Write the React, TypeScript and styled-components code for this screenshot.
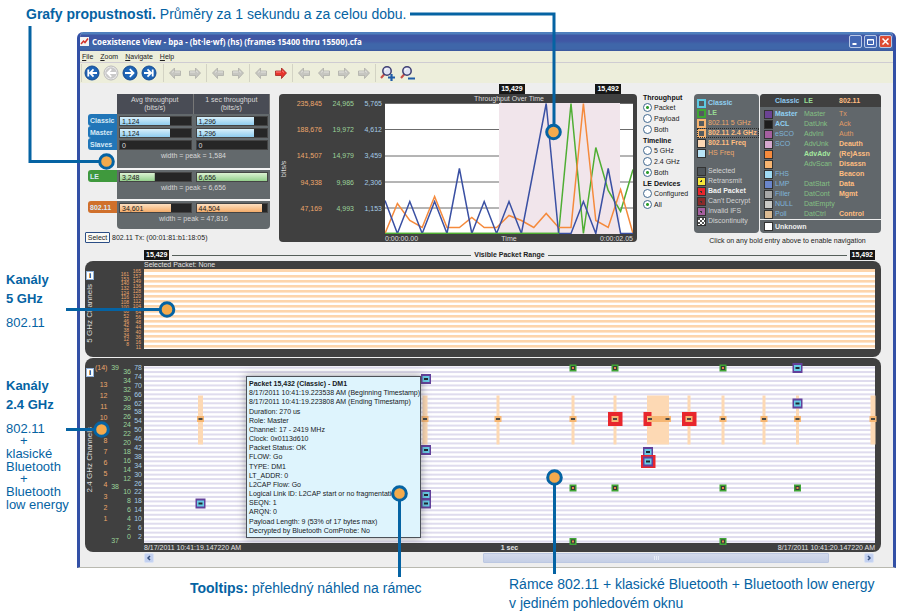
import React from 'react';
import styled, { createGlobalStyle, css } from 'styled-components';

const BLUE = '#0563a3';
const DARK = '#404040';
const ORANGE = '#eda76c';
const GREEN = '#9bd39a';
const SKY = '#a5cbe6';

const Global = createGlobalStyle`
  * { box-sizing: border-box; }
  body { margin: 0; background: #fff; font-family: "Liberation Sans", Arial, sans-serif; }
  button { font: inherit; color: inherit; padding: 0; margin: 0; border: 0; background: none; cursor: pointer; }
`;

const Page = styled.main`
  position: relative;
  display: grid;
  grid-template-columns: 77px minmax(0, 1fr);
  grid-template-rows: 32px auto auto;
  padding-right: 4px;
  color: ${BLUE};
  font-size: 13px;
`;

const TopNote = styled.p`
  grid-column: 1 / -1;
  margin: 0;
  padding: 5px 0 0 26px;
  line-height: 18px;
  font-size: 14px;
`;

const SideNotes = styled.aside`
  padding: 238px 0 0 6px;
  white-space: nowrap;
`;

const SideHeading = styled.h2`
  margin: 0;
  font-size: 13px;
  line-height: 19px;
`;

const SideText = styled.p<{ $last?: boolean }>`
  margin: 8px 0 ${p => (p.$last ? 0 : 47)}px;
  line-height: 13px;
  font-size: 13px;
`;

const Plus = styled.span`
  display: block;
  padding-left: 14px;
  line-height: 12px;
`;

const BottomNotes = styled.footer`
  grid-column: 1 / -1;
  display: grid;
  grid-template-columns: 319px 1fr;
  padding: 7px 0 0 190px;
  font-size: 14px;
  line-height: 19px;
  p { margin: 0; }
  p:first-child { padding-top: 4px; }
`;

const Leaders = styled.svg`
  position: absolute;
  top: 0;
  left: 0;
  pointer-events: none;
`;

/* ---------- window ---------- */

const Window = styled.section`
  border: 3px solid #3350a6;
  border-top: 0;
  border-bottom: 1px solid #b9b9b0;
  border-radius: 6px 6px 0 0;
  background: #eee;
  color: #222;
  font-size: 7px;
  line-height: 10px;
  overflow: hidden;
`;

const TitleBar = styled.header`
  display: flex;
  align-items: center;
  gap: 3px;
  height: 19px;
  padding: 0 1px 0 0;
  background: linear-gradient(#4f7fbd 0 2px, #4057a4 3px 9px, #3f66a9 12px 17px, #3a559b);
  color: #fff;
  h1 { flex: 1; margin: 0; font: bold 8px/12px "Open Sans", sans-serif; }
`;

const TitleButton = styled.button<{ $close?: boolean }>`
  display: grid;
  place-items: center;
  width: 13px;
  height: 13px;
  margin-left: -1px;
  border: 1px solid #b9c8e6;
  border-radius: 2px;
  background: ${p => (p.$close ? '#dd4b32' : '#4468b4')};
`;

const MenuBar = styled.nav`
  display: flex;
  gap: 7px;
  height: 12px;
  padding-left: 2px;
  border-bottom: 1px solid #cfccd2;
  background: #edeedb;
  u { text-underline-offset: 1px; }
`;

const Toolbar = styled.div`
  display: flex;
  align-items: center;
  height: 20px;
  padding-left: 1px;
  background: #edeedb;
`;

const ToolGroup = styled.div<{ $first?: boolean }>`
  display: flex;
  gap: ${p => (p.$first ? 3 : 4)}px;
  padding: 0 ${p => (p.$first ? 6 : 3)}px 0 ${p => (p.$first ? 2 : 3)}px;
  border-left: 1px solid #d3d3c4;
  button { display: grid; place-items: center; width: 16px; height: 18px; }
`;

const Content = styled.div`
  padding: 1px 12px 4px 5px;
`;

const Overview = styled.div`
  display: grid;
  grid-template-columns: 185px minmax(0, 1fr) 47px 185px;
  column-gap: 6px;
  padding-left: 3px;
  height: 166px;
`;

/* ---------- throughput table ---------- */

const Rates = styled.div`
  padding-top: 10px;
  white-space: nowrap;
`;

const RateTable = styled.table`
  width: 182px;
  table-layout: fixed;
  border-spacing: 0;
  text-align: center;
  thead th {
    height: 20px;
    padding: 0;
    background: #494c55;
    color: #d9d9d9;
    font-weight: normal;
    line-height: 8px;
    border-right: 1px solid #777;
  }
  thead td { width: 29px; padding: 0; }
  tbody td { padding: 1px 2px 0; background: #63696c; color: #d8d8d8; }
  tbody tr { height: 12px; }
`;

const Tab = styled.th<{ $color: string }>`
  height: 12px;
  padding: 0 0 0 2px;
  border-radius: 3px 0 0 3px;
  background: ${p => p.$color};
  color: #d7e9f5;
  line-height: 11px;
  text-align: left;
`;

const PeakRow = styled.tr<{ $h: number }>`
  && { height: ${p => p.$h}px; }
  && td { padding: 0; vertical-align: top; line-height: 12px; }
  &&:not(:last-child) td { border-bottom: 2px solid #f4f4f4; }
  &&:last-child td { border-radius: 0 0 4px 4px; }
`;

const Meter = styled.div<{ $fill: number; $from: string; $to: string }>`
  height: 10px;
  padding-left: 2px;
  border: 1px solid #444;
  background:
    linear-gradient(${p => p.$from}, ${p => p.$to}) 0 0 / ${p => p.$fill}% 100% no-repeat,
    #262626;
  color: ${p => (p.$fill ? '#222' : '#ddd')};
  line-height: 9px;
  text-align: left;
`;

const SelectRow = styled.div`
  display: flex;
  align-items: center;
  gap: 2px;
  margin: 3px 0 0 -3px;
`;

const SelectButton = styled.button`
  width: 25px;
  height: 11px;
  border: 1px solid #2b4e86;
  border-radius: 1px;
  background: #fafaf6;
  line-height: 8px;
`;

/* ---------- chart ---------- */

const ChartColumn = styled.div`
  min-width: 0;
`;

const BadgeSpan = styled.div`
  display: flex;
  justify-content: space-between;
  width: 34%;
  margin-left: 61.5%;
`;

const Badge = styled.span`
  padding: 0 2px;
  background: #161616;
  color: #fff;
  font-weight: bold;
  line-height: 10px;
`;

const ChartPanel = styled.figure`
  display: grid;
  grid-template-columns: 10px 36px 32px 28px minmax(0, 1fr);
  grid-template-rows: 9px 131px 8px;
  margin: 0;
  padding-right: 4px;
  border-radius: 4px;
  background: ${DARK};
  color: #ddd;
`;

const ChartTitle = styled.figcaption`
  grid-column: 5;
  text-align: center;
`;

const Vertical = styled.span`
  writing-mode: vertical-rl;
  transform: rotate(180deg);
  text-align: center;
`;

const Scale = styled.div<{ $color: string }>`
  display: grid;
  grid-template-rows: repeat(5, 1fr);
  padding-right: 3px;
  color: ${p => p.$color};
  text-align: right;
  line-height: 2px;
`;

const AxisRow = styled.div`
  grid-column: 5;
  display: flex;
  justify-content: space-between;
  line-height: 9px;
`;

const Fill = styled.svg`
  display: block;
  width: 100%;
  height: 100%;
`;

/* ---------- options ---------- */

const Options = styled.form`
  padding-top: 9px;
`;

const OptionGroup = styled.fieldset`
  margin: 0 0 1px;
  padding: 0;
  border: 0;
  legend { padding: 0; font-weight: bold; line-height: 9px; color: #111; }
  label { display: flex; align-items: center; gap: 2px; height: 11px; white-space: nowrap; }
  input {
    appearance: none;
    flex: none;
    width: 9px;
    height: 9px;
    margin: 0;
    border: 1px solid #41688f;
    border-radius: 50%;
    background: #fff;
  }
  input:checked { background: radial-gradient(#2f9e2f 0 1px, #fff 2px); }
`;

/* ---------- legends ---------- */

const LegendArea = styled.div`
  display: grid;
  grid-template-columns: 65px minmax(0, 1fr);
  grid-template-rows: 139px 14px;
  column-gap: 1px;
  padding-top: 10px;
  margin-left: -2px;
  white-space: nowrap;
`;

const LegendCaption = styled.p`
  grid-column: 1 / -1;
  margin: 0;
  line-height: 16px;
  text-align: center;
`;

const StateList = styled.ul`
  margin: 0;
  padding: 4px 0 0 3px;
  list-style: none;
  border-radius: 4px;
  background: #61676b;
`;

const StateItem = styled.li<{ $color: string; $bold?: boolean; $focus?: boolean; $gap?: boolean }>`
  display: flex;
  align-items: center;
  gap: 2px;
  height: 10px;
  margin-top: ${p => (p.$gap ? 8 : 0)}px;
  color: ${p => p.$color};
  font-weight: ${p => (p.$bold ? 'bold' : 'normal')};
  outline: ${p => (p.$focus ? '1px dotted #2a2a2a' : 'none')};
  outline-offset: -1px;
`;

const Swatch = styled.i<{ $fill: string; $ring?: string; $dot?: boolean }>`
  flex: none;
  display: inline-block;
  width: 9px;
  height: 9px;
  border: 1px solid #333;
  background: ${p => p.$fill};
  ${p => p.$ring && css`border: 2px solid ${p.$ring};`}
  ${p => p.$dot && css`background: radial-gradient(#333 0 1px, ${p.$fill} 1px);`}
`;

const PacketTable = styled.table`
  width: 100%;
  height: 139px;
  border-spacing: 0;
  border-radius: 4px;
  overflow: hidden;
  background: #61676b;
  text-align: left;
  table-layout: fixed;
  th, td { padding: 0; height: 10px; line-height: 10px; }
  thead th { height: 13px; background: ${DARK}; }
  tbody tr:last-child td { border-top: 1px solid #eee; height: 14px; color: #eee; font-weight: bold; }
  td:first-child { padding-left: 4px; font-size: 0; line-height: 0; }
  tbody tr:first-child td { height: 12px; padding-top: 2px; }
`;

const Kind = styled.td<{ $color: string; $bold?: boolean }>`
  color: ${p => p.$color};
  font-weight: ${p => (p.$bold ? 'bold' : 'normal')};
`;

const KindHead = styled.th<{ $color: string }>`
  color: ${p => p.$color};
`;

/* ---------- timelines ---------- */

const RangeRow = styled.div`
  display: flex;
  align-items: center;
  gap: 3px;
  margin: 0 6px 1px 59px;
  strong { color: #222; }
`;

const Rule = styled.span`
  flex: 1;
  height: 1px;
  background: #555f5a;
`;

const Channels = styled.section<{ $plot: number; $foot: number }>`
  display: grid;
  grid-template-columns: 59px minmax(0, 1fr);
  grid-template-rows: 8px ${p => p.$plot}px ${p => p.$foot}px;
  margin-bottom: 1px;
  padding-right: 6px;
  border-radius: 8px;
  background: ${DARK};
  color: #e4e4e4;
`;

const ChannelCaption = styled.span`
  grid-column: 2;
  line-height: 8px;
`;

const ChannelAxis = styled.div<{ $cols: string }>`
  grid-column: 1;
  display: grid;
  grid-template-columns: ${p => p.$cols};
  min-height: 0;
`;

const AxisName = styled.div<{ $gap: number }>`
  display: flex;
  flex-direction: column;
  align-items: center;
  gap: ${p => p.$gap}px;
  padding-top: 2px;
  color: #ddd;
  font-size: 8px;
  line-height: 10px;
  white-space: nowrap;
`;

const InfoButton = styled.button`
  width: 8px;
  height: 9px;
  border: 1px solid #8fb0d8;
  background: #fff;
  color: #111;
  font-size: 8px;
  font-weight: bold;
  line-height: 7px;
`;

const Ticks = styled.ol<{ $color: string; $tiny?: boolean; $top?: number; $bottom?: number }>`
  display: flex;
  flex-direction: column;
  justify-content: space-between;
  margin: ${p => p.$top ?? 0}px 0 ${p => p.$bottom ?? 0}px;
  padding: 0;
  list-style: none;
  color: ${p => p.$color};
  font-size: ${p => (p.$tiny ? 5 : 7)}px;
  line-height: 4px;
  text-align: right;
`;

const Split = styled.li<{ $gap: number }>`
  margin-top: ${p => p.$gap}px;
`;

const WifiTicks = styled.div`
  display: grid;
  grid-template-rows: 4px 138px;
  row-gap: 13px;
`;

const LeTicks = styled.div`
  display: grid;
  grid-template-rows: 111px 49px;
  row-gap: 9px;
  padding-top: 4px;
`;

const Plot = styled.div`
  position: relative;
  grid-column: 2;
  min-height: 0;
`;

const PlotFoot = styled.div`
  grid-column: 2;
  display: flex;
  justify-content: space-between;
`;

const PacketTip = styled.div`
  position: absolute;
  top: 10px;
  left: 102px;
  width: max-content;
  min-width: 167px;
  height: 162px;
  padding: 2px 0 0 2px;
  overflow: hidden;
  border: 1px solid #4c5157;
  background: #def4fd;
  color: #16191c;
  box-shadow: 0 0 8px 1px rgba(60, 60, 70, 0.4);
  white-space: nowrap;
  ul { display: grid; grid-template-rows: repeat(18, 1fr); height: 165px; margin: 0; padding: 0; list-style: none; }
  li { line-height: 9px; }
  li:first-child { font-weight: bold; }
`;

const ScrollRow = styled.div`
  display: grid;
  grid-template-columns: 10px minmax(0, 329fr) minmax(0, 345fr) minmax(0, 35fr) 10px;
  height: 10px;
  margin: 0 7px 0 59px;
`;

const ScrollArrow = styled.button`
  display: grid;
  place-items: center;
  border: 1px solid #d9e2f5;
  border-radius: 2px;
  background: #c3d1f0;
`;

const ScrollThumb = styled.button`
  display: grid;
  place-items: center;
  grid-column: 3;
  border: 1px solid #bcc8e2;
  border-radius: 1px;
  background: linear-gradient(#d3daec, #c5cfe6);
`;

/* ---------- icons ---------- */

function RoundIcon({ dir, bar, off }: { dir: 'l' | 'r'; bar?: boolean; off?: boolean }) {
  const c = off ? '#b9b9b9' : '#1d5fad';
  return (
    <svg width="16" height="16" viewBox="0 0 16 16">
      <circle cx="8" cy="8" r="7" fill={off ? '#eee' : c} stroke={off ? c : '#174e93'} />
      <circle cx="8" cy="8" r="5.8" fill={off ? '#c9c9c9' : '#1e66b8'} />
      <g transform={dir === 'r' ? 'matrix(-1 0 0 1 16 0)' : undefined} stroke="#fff" strokeWidth="1.8" fill="none">
        <path d={bar ? 'M13 8H6M9.5 4.4L6 8l3.500 3.600M4.300 4.500v7' : 'M13 8H4.500M8.200 4.200L4.500 8l3.700 3.800'} />
      </g>
    </svg>
  );
}

function ArrowIcon({ dir, red }: { dir: 'l' | 'r'; red?: boolean }) {
  return (
    <svg width="14" height="14" viewBox="0 0 14 14">
      <g transform={dir === 'r' ? 'matrix(-1 0 0 1 14 0)' : undefined}>
        <path d="M1.500 7L6.500 2v3h6v4.500h-6v3z" fill={red ? '#e8352c' : '#c6c6c1'} stroke={red ? '#a52320' : '#aeaeaa'} strokeWidth=".8" />
        <path d="M4 6.500L6 4.800M7 6h5" stroke={red ? '#f88' : '#e3e3de'} />
      </g>
    </svg>
  );
}

function LensIcon({ plus }: { plus?: boolean }) {
  return (
    <svg width="17" height="17" viewBox="0 0 17 17">
      <path d="M5.500 9L2 13" stroke="#c9504a" strokeWidth="2" />
      <circle cx="8" cy="6" r="4.200" fill="#dfe2f3" stroke="#3f3f74" strokeWidth="1.500" />
      <path d="M6 5.500a2.500 2.500 0 0 1 2.500-2" stroke="#fff" fill="none" />
      <path d={plus ? 'M9 12.500h7M12.500 9v7' : 'M9 13.500h7'} stroke="#1f5ca8" strokeWidth="2.200" />
    </svg>
  );
}

/* ---------- data ---------- */

const BLUE_BAR: [string, string] = ['#d8f0fb', '#8fcdf0'];
const GREEN_BAR: [string, string] = ['#dcf2d3', '#93cf8c'];
const ORANGE_BAR: [string, string] = ['#fde0c0', '#f4ac6a'];

type Rate = { name: string; tab: string; a: string; af: number; b: string; bf: number; tone: [string, string] };

const rateGroups: { rows: Rate[]; peak: string; h: number }[] = [
  {
    rows: [
      { name: 'Classic', tab: '#2176b8', a: '1,124', af: 71, b: '1,296', bf: 82, tone: BLUE_BAR },
      { name: 'Master', tab: '#2176b8', a: '1,124', af: 71, b: '1,296', bf: 82, tone: BLUE_BAR },
      { name: 'Slaves', tab: '#2176b8', a: '0', af: 0, b: '0', bf: 0, tone: BLUE_BAR },
    ],
    peak: '1,584',
    h: 20,
  },
  { rows: [{ name: 'LE', tab: '#3f993d', a: '3,248', af: 49, b: '6,656', bf: 100, tone: GREEN_BAR }], peak: '6,656', h: 19 },
  { rows: [{ name: '802.11', tab: '#d0702b', a: '34,601', af: 72, b: '44,504', bf: 93, tone: ORANGE_BAR }], peak: '47,816', h: 16 },
];

const scales = [
  { color: ORANGE, values: ['235,845', '188,676', '141,507', '94,338', '47,169'] },
  { color: GREEN, values: ['24,965', '19,972', '14,979', '9,986', '4,993'] },
  { color: SKY, values: ['5,765', '4,612', '3,459', '2,306', '1,153'] },
];

const series = [
  { color: '#4fae33', values: [0, 0, 0, 0, 0, 0, 0, 0, 0, 0, 0, 0, 0, 0, 0, 130, 0, 86, 43, 22, 64] },
  { color: '#f58a3c', values: [0, 30, 13, 6, 37, 6, 6, 16, 6, 6, 18, 13, 6, 20, 6, 6, 130, 13, 6, 44, 0] },
  { color: '#3a50a3', values: [33, 0, 32, 0, 32, 0, 65, 0, 32, 0, 32, 0, 65, 130, 0, 0, 32, 0, 65, 0, 0] },
];

const optionGroups = [
  { title: 'Throughput', items: ['Packet', 'Payload', 'Both'], on: 0 },
  { title: 'Timeline', items: ['5 GHz', '2.4 GHz', 'Both'], on: 2 },
  { title: 'LE Devices', items: ['Configured', 'All'], on: 1 },
];

type State = { t: string; c: string; fill: string; ring?: string; bold?: boolean; focus?: boolean; gap?: boolean; dot?: boolean };

const states: State[] = [
  { t: 'Classic', c: '#8fd0f2', fill: '#555b5f', ring: '#5cc9e2', bold: true },
  { t: 'LE', c: '#98dc94', fill: '#555b5f', ring: '#3fa535', bold: true },
  { t: '802.11 5 GHz', c: '#eda76c', fill: '#555b5f', ring: '#f7b470' },
  { t: '802.11 2.4 GHz', c: '#ffbd80', fill: '#555b5f', ring: '#f7b470', bold: true, focus: true },
  { t: '802.11 Freq', c: '#ffbd80', fill: '#fdd8b4', bold: true },
  { t: 'HS Freq', c: '#eda76c', fill: '#b9e4f7' },
  { t: 'Selected', c: '#d4d4d4', fill: '#4f555a', gap: true },
  { t: 'Retransmit', c: '#d4d4d4', fill: '#f5e63a', dot: true },
  { t: 'Bad Packet', c: '#f2f2f2', fill: '#e8262c', bold: true, dot: true },
  { t: "Can't Decrypt", c: '#d4d4d4', fill: '#8a2a2a', dot: true },
  { t: 'Invalid IFS', c: '#d4d4d4', fill: '#a55f9f', dot: true },
  { t: 'Discontinuity', c: '#d4d4d4', fill: 'repeating-conic-gradient(#fff 0 25%, #555 0 50%) 0 0 / 4px 4px' },
];

// fill, classic, LE, 802.11; a leading * marks an entry that can be navigated
const packets: [string, string, string, string][] = [
  ['#6b4394', '*Master', 'Master', 'Tx'],
  ['#1d1d1d', '*ACL', 'DatUnk', 'Ack'],
  ['#a55f9f', 'eSCO', 'AdvIni', 'Auth'],
  ['#d5a8cf', 'SCO', 'AdvUnk', '*Deauth'],
  ['#f58a3c', '', '*AdvAdv', '*(Re)Assn'],
  ['#f7b470', '', 'AdvScan', '*Disassn'],
  ['#9fdaf4', 'FHS', '', '*Beacon'],
  ['#6a86cc', 'LMP', 'DatStart', '*Data'],
  ['#a8a8a8', 'Filler', 'DatCont', '*Mgmt'],
  ['#c9c9c6', 'NULL', 'DatEmpty', ''],
  ['#dcbb93', 'Poll', 'DatCtrl', '*Control'],
];

const kindColors = [
  ['#7fb4da', '#8fd0f2'],
  ['#84c083', '#a4e89f'],
  ['#e09c66', '#ffbd80'],
];

const low5 = ['161', '153', '140', '132', '124', '116', '108', '100', '60', '52', '46', '42', '38', '34', '12', '8'];
const high5 = ['165', '157', '149', '136', '128', '120', '112', '104', '64', '56', '48', '44', '40', '36', '16', '11'];

const wifiNumbers = ['13', '12', '11', '10', '9', '8', '7', '6', '5', '4', '3', '2', '1'];
const leNumbers = Array.from({ length: 19 }, (_, i) => String(36 - i * 2));
const classicNumbers = Array.from({ length: 20 }, (_, i) => String(78 - i * 4));

const tipLines = [
  'Packet 15,432 (Classic) - DM1',
  '8/17/2011 10:41:19.223538 AM (Beginning Timestamp)',
  '8/17/2011 10:41:19.223808 AM (Ending Timestamp)',
  'Duration: 270 us',
  'Role: Master',
  'Channel: 17 - 2419 MHz',
  'Clock: 0x0113d610',
  'Packet Status: OK',
  'FLOW: Go',
  'TYPE: DM1',
  'LT_ADDR: 0',
  'L2CAP Flow: Go',
  'Logical Link ID: L2CAP start or no fragmentation',
  'SEQN: 1',
  'ARQN: 0',
  'Payload Length: 9 (53% of 17 bytes max)',
  'Decrypted by Bluetooth ComProbe: No',
  'Connection Event Low Device: 0x00:00:00:00',
];

/* ---------- parts ---------- */

function ThroughputTable() {
  return (
    <Rates>
      <RateTable>
        <thead>
          <tr>
            <td />
            <th>Avg throughput<br />(bits/s)</th>
            <th>1 sec throughput<br />(bits/s)</th>
          </tr>
        </thead>
        <tbody>
          {rateGroups.map(g => (
            <React.Fragment key={g.peak}>
              {g.rows.map(r => (
                <tr key={r.name}>
                  <Tab scope="row" $color={r.tab}>{r.name}</Tab>
                  <td><Meter $fill={r.af} $from={r.tone[0]} $to={r.tone[1]}>{r.a}</Meter></td>
                  <td><Meter $fill={r.bf} $from={r.tone[0]} $to={r.tone[1]}>{r.b}</Meter></td>
                </tr>
              ))}
              <PeakRow $h={g.h}>
                <th />
                <td colSpan={2}>width = peak = {g.peak}</td>
              </PeakRow>
            </React.Fragment>
          ))}
        </tbody>
      </RateTable>
      <SelectRow>
        <SelectButton type="button">Select</SelectButton>
        <span>802.11 Tx: (00:01:81:b1:18:05)</span>
      </SelectRow>
    </Rates>
  );
}

function ChartSvg() {
  return (
    <Fill viewBox="0 0 248 131" preserveAspectRatio="none">
      <rect width="248" height="131" fill="#fff" />
      {[0.5, 26.5, 53, 79, 105].map(y => <path key={y} d={`M0 ${y}H248`} stroke="#6b6b6b" />)}
      <rect x="114" y="0" width="121" height="131" fill="#f1e5eb" />
      {series.map(s => (
        <polyline
          key={s.color}
          fill="none"
          stroke={s.color}
          strokeWidth="1.5"
          points={s.values.map((v, i) => `${i * 12.4},${130.5 - v}`).join(' ')}
        />
      ))}
      <path d="M0 130.500H174" stroke="#4fae33" strokeWidth="1.500" />
    </Fill>
  );
}

function ThroughputChart() {
  return (
    <ChartColumn>
      <BadgeSpan><Badge>15,429</Badge><Badge>15,492</Badge></BadgeSpan>
      <ChartPanel>
        <ChartTitle>Throughput Over Time</ChartTitle>
        <Vertical>bits/s</Vertical>
        {scales.map(s => (
          <Scale key={s.color} $color={s.color}>{s.values.map(v => <span key={v}>{v}</span>)}</Scale>
        ))}
        <ChartSvg />
        <AxisRow><span>0:00:00.00</span><span>Time</span><span>0:00:02.05</span></AxisRow>
      </ChartPanel>
    </ChartColumn>
  );
}

function Legends() {
  return (
    <LegendArea>
      <StateList>
        {states.map(s => (
          <StateItem key={s.t} $color={s.c} $bold={s.bold} $focus={s.focus} $gap={s.gap}>
            <Swatch $fill={s.fill} $ring={s.ring} $dot={s.dot} />
            {s.bold ? <button type="button">{s.t}</button> : s.t}
          </StateItem>
        ))}
      </StateList>
      <PacketTable>
        <colgroup>
          <col width="15" /><col width="29" /><col width="35" /><col />
        </colgroup>
        <thead>
          <tr>
            <th />
            <KindHead $color="#8fc8ee">Classic</KindHead>
            <KindHead $color="#98dc94">LE</KindHead>
            <KindHead $color="#ffbd80">802.11</KindHead>
          </tr>
        </thead>
        <tbody>
          {packets.map(([fill, ...names]) => (
            <tr key={fill}>
              <td><Swatch $fill={fill} /></td>
              {names.map((n, i) => {
                const bold = n.startsWith('*');
                return (
                  <Kind key={i} $color={kindColors[i][bold ? 1 : 0]} $bold={bold}>
                    {bold ? <button type="button">{n.slice(1)}</button> : n}
                  </Kind>
                );
              })}
            </tr>
          ))}
          <tr>
            <td><Swatch $fill="#fff" /></td>
            <td colSpan={3}>Unknown</td>
          </tr>
        </tbody>
      </PacketTable>
      <LegendCaption>Click on any bold entry above to enable navigation</LegendCaption>
    </LegendArea>
  );
}

function WifiMark({ x, w = 7 }: { x: number; w?: number }) {
  return (
    <g>
      <rect x={x - w / 2} y="50" width={w} height="6" fill="#f6b673" />
      <rect x={x - 2} y="52" width="4" height="2" fill="#4a4a44" />
    </g>
  );
}

function LeMark({ x, y }: { x: number; y: number }) {
  return (
    <g>
      <rect x={x - 3.5} y={y - 3.5} width="7" height="7" fill="#3fa535" />
      <rect x={x - 2} y={y - 2} width="4" height="4" fill="#3a3a3a" />
      <rect x={x - 1} y={y - 1} width="2" height="2" fill="#e08a4a" />
    </g>
  );
}

function ClassicMark({ x, y }: { x: number; y: number }) {
  return (
    <g>
      <rect x={x - 5} y={y - 5} width="10" height="10" fill="#63409a" />
      <rect x={x - 3.5} y={y - 3} width="7" height="6" fill="#66cbe4" />
      <rect x={x - 2} y={y - 1} width="4" height="2" fill="#1d2a33" />
    </g>
  );
}

const wifiBars = [56.5, 281, 354, 429, 471, 545, 579, 620, 653.5, 729];
const wideBars = [56.5, 281, 729];
const leMarks = [[429, 2], [471, 2], [579, 2], [429, 122], [471, 122], [579, 122], [653.5, 122], [429, 175.5], [579, 175.5]];
const classicMarks = [[56.5, 137.5], [282, 13], [282, 84], [282, 129], [282, 137.5], [504, 86], [653.5, 2], [653.5, 37.5]];

function PacketPlot() {
  return (
    <Fill viewBox="0 0 731 177" preserveAspectRatio="none" overflow="visible">
      <rect width="731" height="177" fill="#fff" />
      {Array.from({ length: 40 }, (_, i) => (
        <rect key={i} x="0" y={i * 4.46 + 0.6} width="731" height="2" fill="#dfdcee" />
      ))}
      {wifiBars.map(x => {
        const w = wideBars.includes(x) ? 5 : 3;
        return <rect key={x} x={x - w / 2} y="29.500" width={w} height="49" fill="#fdd9b4" />;
      })}
      <rect x="503" y="29.500" width="22" height="49" fill="#fdd9b4" />
      <rect x="464" y="46" width="14.500" height="14" fill="#e8262c" />
      <rect x="538" y="46" width="14.500" height="14" fill="#e8262c" />
      <rect x="499.500" y="46" width="8" height="14" fill="#e8262c" />
      <rect x="503" y="50" width="22" height="6" fill="#f6b673" />
      <WifiMark x={506} w={6} />
      <WifiMark x={523.5} />
      {wifiBars.map(x => <WifiMark key={x} x={x} />)}
      {leMarks.map(([x, y]) => <LeMark key={`${x}-${y}`} x={x} y={y} />)}
      {classicMarks.map(([x, y]) => <ClassicMark key={`${x}-${y}`} x={x} y={y} />)}
      <rect x="497" y="89" width="14.500" height="13" fill="#e8262c" />
      <ClassicMark x={504} y={95.5} />
    </Fill>
  );
}

function FiveGhz() {
  return (
    <Channels $plot={80} $foot={8}>
      <ChannelCaption>Selected Packet: None</ChannelCaption>
      <ChannelAxis $cols="10px 34px 12px">
        <AxisName $gap={4}>
          <InfoButton type="button" aria-label="5 GHz info">i</InfoButton>
          <Vertical>5 GHz Channels</Vertical>
        </AxisName>
        <Ticks $color={ORANGE} $tiny $top={3} $bottom={3}>{low5.map(n => <li key={n}>{n}</li>)}</Ticks>
        <Ticks $color={ORANGE} $tiny>{high5.map(n => <li key={n}>{n}</li>)}</Ticks>
      </ChannelAxis>
      <Plot>
        <Fill viewBox="0 0 731 80" preserveAspectRatio="none">
          <rect width="731" height="80" fill="#fff" />
          {Array.from({ length: 16 }, (_, i) => (
            <rect key={i} x="0" y={i * 5 + (i ? 1 : 0)} width="731" height={i ? 2.6 : 3} fill="#fdd5ac" />
          ))}
        </Fill>
      </Plot>
    </Channels>
  );
}

function TwoGhz() {
  return (
    <Channels $plot={177} $foot={9}>
      <ChannelCaption />
      <ChannelAxis $cols="10px 12px 12px 12px 11px">
        <AxisName $gap={50}>
          <InfoButton type="button" aria-label="2.4 GHz info">i</InfoButton>
          <Vertical>2.4 GHz Channels</Vertical>
        </AxisName>
        <WifiTicks>
          <Ticks $color={ORANGE}><li>(14)</li></Ticks>
          <Ticks $color={ORANGE}>{wifiNumbers.map(n => <li key={n}>{n}</li>)}</Ticks>
        </WifiTicks>
        <Ticks $color={GREEN}>
          <li>39</li>
          <Split $gap={64}>38</Split>
          <li>37</li>
        </Ticks>
        <LeTicks>
          <Ticks $color={GREEN}>{leNumbers.slice(0, 13).map(n => <li key={n}>{n}</li>)}</Ticks>
          <Ticks $color={GREEN}>{leNumbers.slice(13).map(n => <li key={n}>{n}</li>)}</Ticks>
        </LeTicks>
        <Ticks $color={SKY} $bottom={4}>{classicNumbers.map(n => <li key={n}>{n}</li>)}</Ticks>
      </ChannelAxis>
      <Plot>
        <PacketPlot />
        <PacketTip role="tooltip">
          <ul>{tipLines.map(l => <li key={l}>{l}</li>)}</ul>
        </PacketTip>
      </Plot>
      <PlotFoot>
        <span>8/17/2011 10:41:19.147220 AM</span>
        <strong>1 sec</strong>
        <span>8/17/2011 10:41:20.147220 AM</span>
      </PlotFoot>
    </Channels>
  );
}

const leaderPaths = [
  { d: 'M410 14H554V132', x: 553.5, y: 132 },
  { d: 'M30 26V161.500H106', x: 106.5, y: 161.5 },
  { d: 'M66 309.500H167', x: 167, y: 309.5 },
  { d: 'M66 429.500H101', x: 101.5, y: 429.5 },
  { d: 'M399.500 493V577', x: 399.5, y: 493.5 },
  { d: 'M554.500 477V574', x: 554.5, y: 477.5 },
];

export default function App() {
  return (
    <>
      <Global />
      <Page>
        <TopNote><strong>Grafy propustnosti.</strong> Průměry za 1 sekundu a za celou dobu.</TopNote>
        <SideNotes>
          <SideHeading>Kanály<br />5 GHz</SideHeading>
          <SideText>802.11</SideText>
          <SideHeading>Kanály<br />2.4 GHz</SideHeading>
          <SideText $last>
            802.11
            <Plus>+</Plus>
            klasické<br />Bluetooth
            <Plus>+</Plus>
            Bluetooth<br />low energy
          </SideText>
        </SideNotes>
        <Window>
          <TitleBar>
            <svg width="9" height="9" viewBox="0 0 9 9">
              <rect width="9" height="9" fill="#f4f4f4" />
              <path d="M1 7l2.500-3 1.500 1.500L8 1.500" stroke="#d4332b" strokeWidth="1.500" fill="none" />
            </svg>
            <h1>Coexistence View - bpa - (bt·le·wf) (hs) (frames 15400 thru 15500).cfa</h1>
            <TitleButton type="button" aria-label="Minimize">
              <svg width="9" height="9"><path d="M1.500 7H5.500" stroke="#fff" strokeWidth="2" /></svg>
            </TitleButton>
            <TitleButton type="button" aria-label="Maximize">
              <svg width="9" height="9"><path d="M1.500 2.500h6v5h-6zM1.500 3h6" stroke="#fff" fill="none" /></svg>
            </TitleButton>
            <TitleButton type="button" aria-label="Close" $close>
              <svg width="9" height="9"><path d="M1.500 1.500l6 6M7.500 1.500l-6 6" stroke="#fff" strokeWidth="1.500" /></svg>
            </TitleButton>
          </TitleBar>
          <MenuBar>
            <button type="button"><u>F</u>ile</button>
            <button type="button"><u>Z</u>oom</button>
            <button type="button"><u>N</u>avigate</button>
            <button type="button"><u>H</u>elp</button>
          </MenuBar>
          <Toolbar>
            <ToolGroup $first>
              <button type="button" aria-label="First"><RoundIcon dir="l" bar /></button>
              <button type="button" aria-label="Previous"><RoundIcon dir="l" off /></button>
              <button type="button" aria-label="Next"><RoundIcon dir="r" /></button>
              <button type="button" aria-label="Last"><RoundIcon dir="r" bar /></button>
            </ToolGroup>
            {['a', 'b', 'c'].map(k => (
              <ToolGroup key={k}>
                <button type="button" aria-label="Back"><ArrowIcon dir="l" /></button>
                <button type="button" aria-label="Forward"><ArrowIcon dir="r" red={k === 'c'} /></button>
              </ToolGroup>
            ))}
            <ToolGroup>
              {(['l', 'l', 'r', 'r'] as const).map((d, i) => (
                <button key={i} type="button" aria-label="Step"><ArrowIcon dir={d} /></button>
              ))}
            </ToolGroup>
            <ToolGroup>
              <button type="button" aria-label="Zoom in"><LensIcon plus /></button>
              <button type="button" aria-label="Zoom out"><LensIcon /></button>
            </ToolGroup>
          </Toolbar>
          <Content>
            <Overview>
              <ThroughputTable />
              <ThroughputChart />
              <Options>
                {optionGroups.map(g => (
                  <OptionGroup key={g.title}>
                    <legend>{g.title}</legend>
                    {g.items.map((t, i) => (
                      <label key={t}>
                        <input type="radio" name={g.title} defaultChecked={i === g.on} />
                        {t}
                      </label>
                    ))}
                  </OptionGroup>
                ))}
              </Options>
              <Legends />
            </Overview>
            <RangeRow>
              <Badge>15,429</Badge><Rule /><strong>Visible Packet Range</strong><Rule /><Badge>15,492</Badge>
            </RangeRow>
            <FiveGhz />
            <TwoGhz />
            <ScrollRow>
              <ScrollArrow type="button" aria-label="Scroll left">
                <svg width="6" height="6"><path d="M4 1L2 3l2 2" stroke="#36507e" strokeWidth="1.500" fill="none" /></svg>
              </ScrollArrow>
              <ScrollThumb type="button" aria-label="Scroll position">
                <svg width="5" height="4"><path d="M.5 0v4M2.500 0v4M4.500 0v4" stroke="#e8eef9" /></svg>
              </ScrollThumb>
              <span />
              <ScrollArrow type="button" aria-label="Scroll right">
                <svg width="6" height="6"><path d="M2 1l2 2-2 2" stroke="#36507e" strokeWidth="1.500" fill="none" /></svg>
              </ScrollArrow>
            </ScrollRow>
          </Content>
        </Window>
        <BottomNotes>
          <p><strong>Tooltips:</strong> přehledný náhled na rámec</p>
          <p>Rámce 802.11 + klasické Bluetooth + Bluetooth low energy<br />v jediném pohledovém oknu</p>
        </BottomNotes>
        <Leaders width="900" height="616" aria-hidden="true">
          {leaderPaths.map(l => (
            <g key={l.d} stroke={BLUE} strokeWidth="3">
              <path d={l.d} fill="none" />
              <circle cx={l.x} cy={l.y} r="6.800" fill="#f4aa4c" />
            </g>
          ))}
        </Leaders>
      </Page>
    </>
  );
}
